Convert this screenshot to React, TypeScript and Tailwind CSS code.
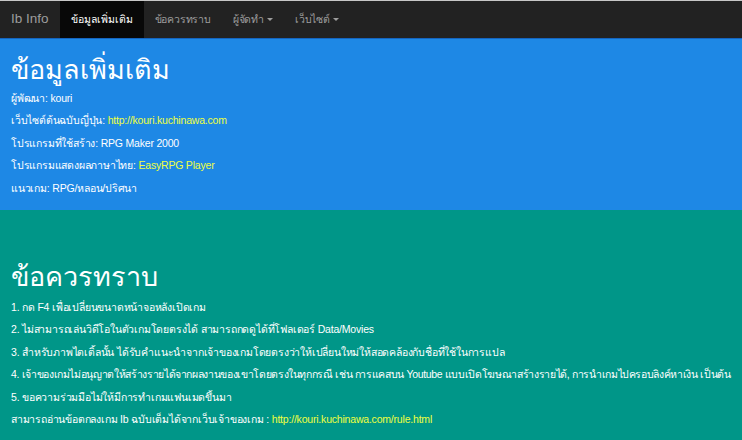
const font = { fontFamily: '"Liberation Sans", "DejaVu Sans", sans-serif' }

function Caret() {
  return <span className="ml-[3px] inline-block w-0 h-0 border-x-[3px] border-x-transparent border-t-[3px] border-t-[#9d9d9d] align-middle" />
}

function Navbar() {
  return (
    <nav className="h-[39px] bg-[#222222] border-t border-t-[#c8c8c8] border-b border-b-[#1565c0] flex items-stretch">
      <div className="px-[11px] flex items-center text-[13.5px] text-[#9d9d9d]">Ib Info</div>
      <div className="bg-[#080808] px-[11px] flex items-center text-[10.5px] text-white">ข้อมูลเพิ่มเติม</div>
      <div className="px-[11px] flex items-center text-[10.5px] text-[#9d9d9d] tracking-[-0.2px]">ข้อควรทราบ</div>
      <div className="px-[11px] flex items-center text-[10.5px] text-[#9d9d9d] tracking-[-0.2px]">
        ผู้จัดทำ
        <Caret />
      </div>
      <div className="px-[11px] flex items-center text-[10.5px] text-[#9d9d9d] tracking-[-0.2px]">
        เว็บไซต์
        <Caret />
      </div>
    </nav>
  )
}

function Row({ label, value, link }: { label: string; value: string; link?: boolean }) {
  return (
    <p className="leading-[15px] mb-[7.5px] text-[10.5px] text-white whitespace-nowrap tracking-[-0.2px]">
      {label}: <span className={link ? "text-[#eeff41]" : ""}>{value}</span>
    </p>
  )
}

export default function App() {
  return (
    <div className="w-[742px] h-[440px] overflow-hidden bg-[#009688]" style={font}>
      <Navbar />
      <section className="bg-[#1e88e5] px-[11px] pt-[16px] pb-[7px]">
        <h1 className="text-[27px] leading-[30px] text-white mb-[5.5px]">ข้อมูลเพิ่มเติม</h1>
        <Row label="ผู้พัฒนา" value="kouri" />
        <Row label="เว็บไซต์ต้นฉบับญี่ปุ่น" value="http://kouri.kuchinawa.com" link />
        <Row label="โปรแกรมที่ใช้สร้าง" value="RPG Maker 2000" />
        <Row label="โปรแกรมแสดงผลภาษาไทย" value="EasyRPG Player" link />
        <Row label="แนวเกม" value="RPG/หลอน/ปริศนา" />
      </section>
      <section className="bg-[#009688] px-[11px] pt-[52px]">
        <h1 className="text-[27px] leading-[30px] text-white mb-[7.5px]">ข้อควรทราบ</h1>
        <div className="text-[10.5px] text-white leading-[15px] whitespace-nowrap tracking-[-0.2px] flex flex-col gap-[7.5px]">
          <p>1. กด F4 เพื่อเปลี่ยนขนาดหน้าจอหลังเปิดเกม</p>
          <p>2. ไม่สามารถเล่นวิดีโอในตัวเกมโดยตรงได้ สามารถกดดูได้ที่โฟลเดอร์ Data/Movies</p>
          <p>3. สำหรับภาพไตเติ้ลนั้น ได้รับคำแนะนำจากเจ้าของเกมโดยตรงว่าให้เปลี่ยนใหม่ให้สอดคล้องกับชื่อที่ใช้ในการแปล</p>
          <p className="tracking-[-0.35px]">4. เจ้าของเกมไม่อนุญาตให้สร้างรายได้จากผลงานของเขาโดยตรงในทุกกรณี เช่น การแคสบน Youtube แบบเปิดโฆษณาสร้างรายได้, การนำเกมไปครอบลิงค์หาเงิน เป็นต้น</p>
          <p>5. ขอความร่วมมือไม่ให้มีการทำเกมแฟนเมดขึ้นมา</p>
          <p>
            สามารถอ่านข้อตกลงเกม Ib ฉบับเต็มได้จากเว็บเจ้าของเกม : <span className="text-[#eeff41]">http://kouri.kuchinawa.com/rule.html</span>
          </p>
        </div>
      </section>
    </div>
  )
}
